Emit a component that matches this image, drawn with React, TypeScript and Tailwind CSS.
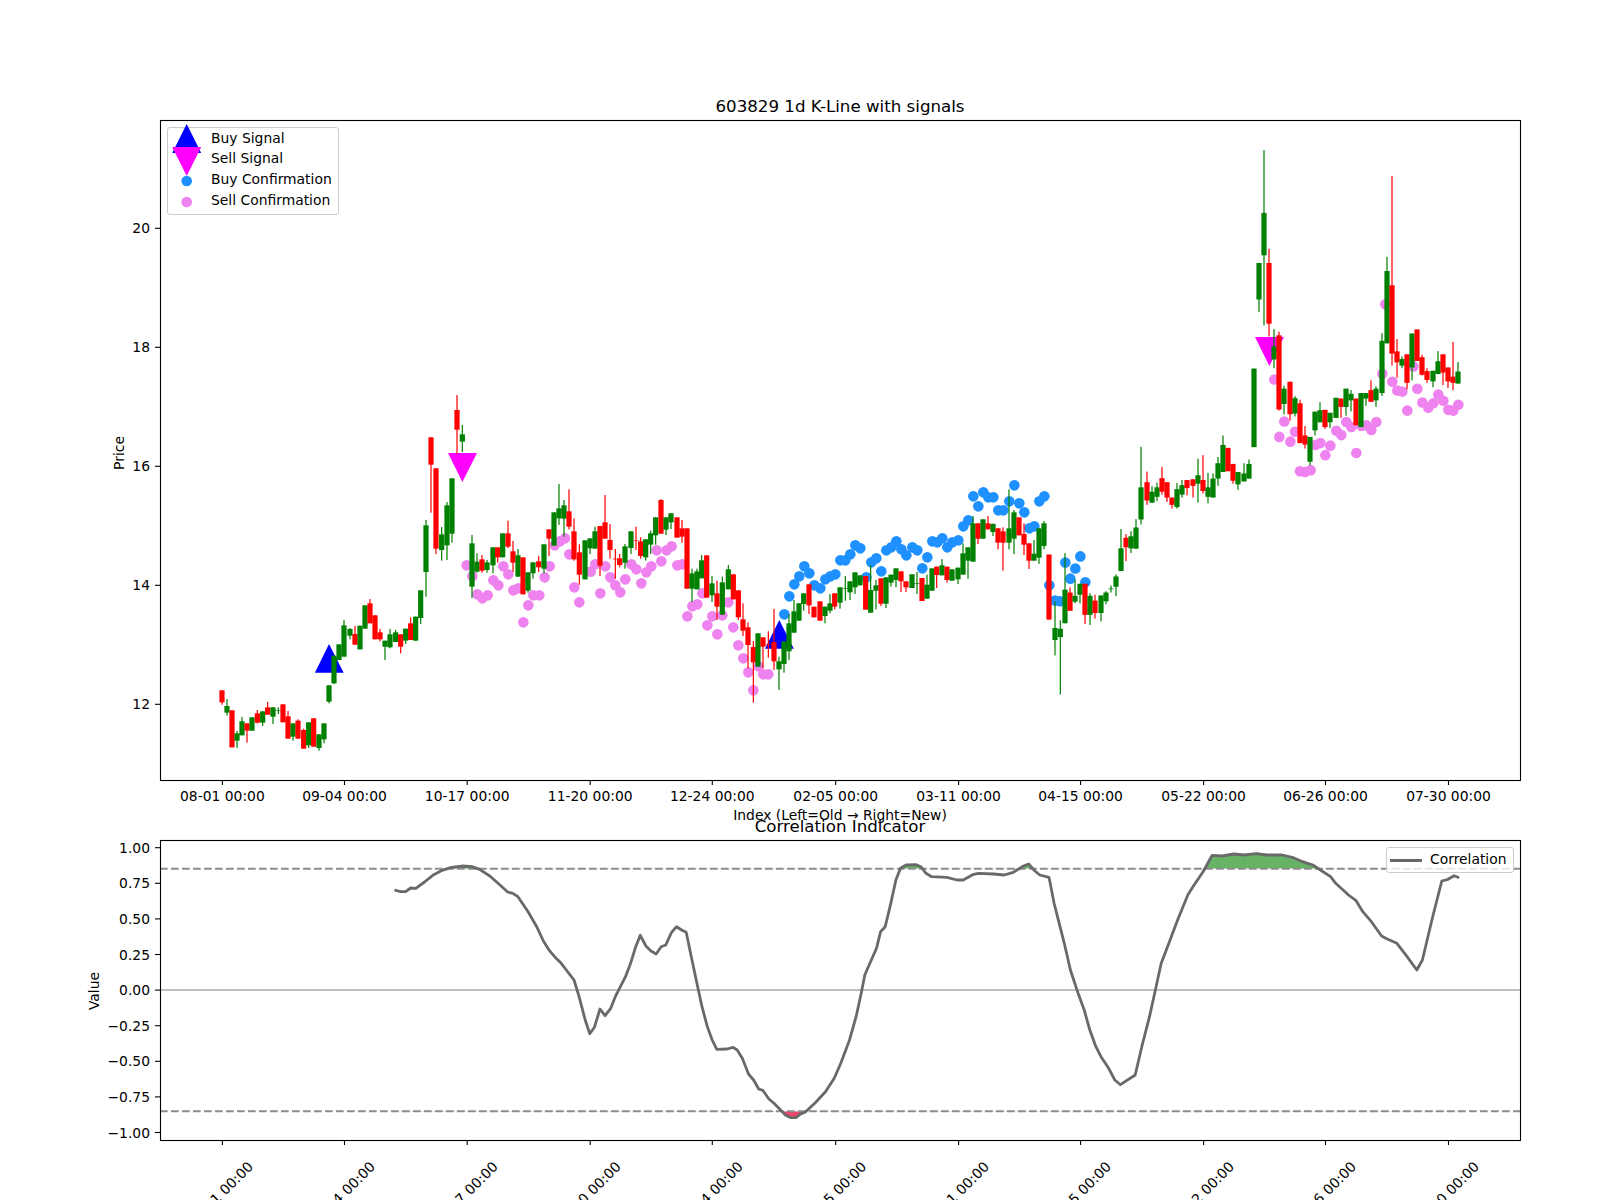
const RED = "#ff0000";
const GREEN = "#008000";
const FONT = "font-['DejaVu_Sans',sans-serif]";

const tickX = [222.4, 344.5, 467.2, 590.2, 712.3, 835.7, 958.6, 1080.6, 1203.6, 1325.5, 1448.5];
const tickDates = [
  "08-01 00:00",
  "09-04 00:00",
  "10-17 00:00",
  "11-20 00:00",
  "12-24 00:00",
  "02-05 00:00",
  "03-11 00:00",
  "04-15 00:00",
  "05-22 00:00",
  "06-26 00:00",
  "07-30 00:00",
];

type Row = [string, number, number, number, number?, number?];
type Seg = { x0: number; y0: number; sy: number; rows: Row[] };

// candles read off the chart: colour, x, body top, body bottom, wick top, wick bottom
const segments: Seg[] = [
  {
    x0: 200,
    y0: 400,
    sy: 3,
    rows: [
      ["r", 66, 871, 907, 871, 914],
      ["g", 81, 918, 938, 897, 947],
      ["r", 96, 931, 1042],
      ["g", 111, 1000, 1022, 993, 1044],
      ["g", 126, 964, 1006, 951, 1006],
      ["r", 141, 970, 992, 970, 1028],
      ["g", 156, 952, 992],
      ["r", 172, 940, 968, 930, 970],
      ["g", 188, 934, 968, 934, 978],
      ["r", 203, 922, 944, 906, 944],
      ["g", 219, 922, 950, 922, 972],
      ["g", 235, 930, 932, 922, 942],
      ["r", 249, 913, 967],
      ["r", 264, 949, 1016, 933, 1016],
      ["g", 279, 970, 1010, 970, 1022],
      ["r", 294, 962, 1016, 958, 1016],
      ["r", 311, 990, 1046, 986, 1046],
      ["g", 326, 967, 1036, 967, 1044],
      ["r", 341, 955, 1040],
      ["g", 357, 1003, 1044, 1003, 1052],
      ["g", 372, 970, 1018, 970, 1030],
      ["g", 387, 856, 905, 856, 910],
      ["g", 402, 767, 850, 767, 852],
      ["g", 417, 733, 780],
      ["g", 432, 676, 770, 660, 770],
      ["g", 450, 687, 707, 684, 718],
      ["r", 465, 702, 734, 678, 734],
      ["g", 480, 677, 748],
      ["g", 495, 616, 686],
      ["r", 510, 610, 670, 597, 670],
      ["r", 525, 646, 718],
      ["r", 540, 697, 718, 687, 724],
      ["g", 555, 722, 740, 722, 780],
      ["g", 570, 703, 742, 687, 745],
      ["g", 587, 697, 726, 690, 726],
      ["r", 602, 703, 740, 703, 760],
      ["g", 617, 686, 722, 686, 732],
      ["r", 632, 670, 720, 652, 720],
      ["g", 647, 650, 722],
      ["g", 662, 571, 654, 571, 672],
      ["g", 678, 376, 516, 360, 590],
      ["r", 693, 112, 194, 112, 338],
      ["r", 708, 205, 446, 205, 462],
      ["g", 725, 403, 450, 381, 482],
      ["g", 741, 316, 436, 306, 480],
      ["g", 756, 235, 401, 235, 428],
      ["r", 771, 30, 89, -15, 162],
      ["g", 787, 103, 125, 75, 156],
    ],
  },
  {
    x0: 450,
    y0: 460,
    sy: 3,
    rows: [
      ["g", 66, 250, 380, 225, 414],
      ["g", 81, 305, 335, 280, 338],
      ["r", 96, 298, 332, 285, 338],
      ["g", 111, 307, 330, 300, 338],
      ["g", 129, 262, 316, 262, 340],
      ["r", 143, 262, 292, 262, 308],
      ["g", 158, 220, 292],
      ["r", 174, 220, 260, 182, 264],
      ["r", 189, 274, 308, 243, 336],
      ["g", 204, 286, 350, 267, 350],
      ["r", 219, 292, 403],
      ["g", 234, 337, 392, 337, 398],
      ["g", 249, 307, 340, 307, 356],
      ["r", 266, 304, 322, 288, 336],
      ["g", 282, 253, 326, 253, 340],
      ["r", 297, 208, 236, 208, 288],
      ["g", 312, 157, 257],
      ["g", 327, 145, 175, 72, 195],
      ["g", 342, 136, 176, 120, 230],
      ["r", 357, 154, 200, 88, 208],
      ["r", 372, 214, 298, 175, 302],
      ["r", 388, 277, 344, 253, 374],
      ["g", 405, 241, 358],
      ["g", 420, 235, 265, 235, 282],
      ["g", 435, 214, 266, 200, 266],
      ["r", 450, 198, 317, 198, 348],
      ["r", 465, 187, 236, 105, 236],
      ["r", 480, 240, 270, 192, 296],
      ["r", 496, 296, 298, 267, 356],
      ["r", 509, 295, 315, 282, 322],
      ["g", 525, 259, 308, 252, 326],
      ["g", 543, 214, 264, 214, 282],
      ["r", 558, 240, 242, 200, 270],
      ["r", 572, 244, 288, 232, 296],
      ["g", 587, 238, 292, 238, 302],
      ["g", 602, 220, 254, 212, 282],
      ["g", 617, 172, 226, 172, 254],
      ["r", 633, 120, 221, 117, 221],
      ["g", 648, 172, 209, 172, 225],
      ["g", 663, 160, 187, 160, 207],
      ["r", 681, 172, 233],
      ["r", 696, 205, 230, 180, 248],
      ["r", 711, 205, 386],
      ["g", 726, 340, 386, 326, 426],
      ["g", 741, 334, 388, 326, 388],
      ["g", 755, 301, 355, 285, 355],
      ["r", 770, 286, 413],
      ["g", 786, 370, 406, 348, 426],
      ["r", 801, 400, 440, 362, 480],
      ["g", 817, 367, 464, 350, 464],
      ["g", 835, 328, 388, 315, 388],
      ["r", 850, 343, 418],
      ["r", 865, 391, 472, 391, 480],
      ["r", 879, 478, 512, 430, 528],
      ["r", 894, 502, 555, 487, 625],
    ],
  },
  {
    x0: 750,
    y0: 460,
    sy: 3,
    rows: [
      ["r", 10, 561, 607, 543, 728],
      ["g", 24, 520, 620],
      ["r", 39, 532, 560, 532, 625],
      ["r", 55, 553, 555, 514, 593],
      ["r", 72, 546, 604, 447, 630],
      ["g", 87, 604, 628, 590, 690],
      ["g", 102, 544, 612, 544, 638],
      ["g", 117, 490, 574, 462, 600],
      ["g", 132, 454, 518, 420, 518],
      ["g", 147, 430, 482],
      ["g", 161, 400, 432, 400, 452],
      ["r", 177, 373, 436, 373, 462],
      ["r", 192, 440, 472],
      ["r", 210, 424, 482],
      ["g", 225, 440, 468, 440, 490],
      ["g", 240, 430, 452, 402, 460],
      ["r", 254, 400, 440, 400, 448],
      ["g", 270, 382, 428, 382, 446],
      ["g", 286, 385, 387, 348, 422],
      ["g", 300, 364, 397, 364, 420],
      ["g", 315, 337, 382, 337, 402],
      ["g", 330, 346, 376],
      ["r", 347, 348, 449],
      ["g", 362, 390, 458, 316, 458],
      ["g", 378, 376, 392, 360, 448],
      ["r", 393, 355, 431, 355, 438],
      ["g", 408, 352, 431, 352, 444],
      ["g", 423, 344, 368, 344, 380],
      ["g", 438, 325, 360, 325, 382],
      ["r", 453, 334, 364, 334, 396],
      ["r", 468, 364, 382, 364, 396],
      ["g", 486, 343, 384],
      ["g", 501, 370, 372, 336, 402],
      ["r", 516, 354, 423],
      ["g", 531, 374, 416, 344, 416],
      ["g", 546, 325, 392, 325, 392],
      ["r", 560, 320, 345, 320, 384],
      ["g", 576, 316, 346, 297, 346],
      ["r", 591, 320, 360, 320, 368],
      ["g", 606, 328, 362],
      ["g", 624, 323, 358, 323, 372],
      ["g", 639, 280, 344, 250, 344],
      ["g", 654, 262, 302, 262, 356],
      ["g", 669, 190, 305, 168, 305],
      ["r", 684, 190, 236, 190, 252],
      ["g", 699, 178, 236],
      ["r", 714, 190, 208, 168, 208],
      ["g", 729, 192, 216, 190, 228],
      ["r", 744, 205, 248, 205, 268],
      ["r", 759, 214, 248, 202, 332],
      ["g", 777, 205, 248, 88, 268],
      ["g", 792, 157, 236, 150, 282],
      ["r", 807, 172, 226],
      ["r", 822, 222, 254, 190, 285],
      ["r", 837, 250, 302, 250, 327],
      ["g", 852, 281, 302, 240, 302],
      ["g", 867, 205, 293, 205, 312],
      ["g", 882, 190, 258, 183, 268],
    ],
  },
  {
    x0: 1030,
    y0: 130,
    sy: 2.737,
    rows: [
      ["r", 57, 1162, 1340],
      ["g", 75, 1363, 1396, 1290, 1438],
      ["g", 91, 1365, 1388, 1342, 1545],
      ["g", 105, 1258, 1350, 1158, 1350],
      ["r", 120, 1266, 1316, 1252, 1316],
      ["g", 135, 1275, 1291, 1230, 1295],
      ["g", 150, 1242, 1272, 1242, 1296],
      ["r", 165, 1242, 1327, 1242, 1352],
      ["g", 180, 1275, 1327, 1268, 1355],
      ["r", 195, 1288, 1322, 1272, 1337],
      ["g", 213, 1274, 1322, 1274, 1345],
      ["g", 228, 1266, 1290, 1262, 1298],
      ["g", 243, 1255, 1257, 1247, 1266],
      ["g", 258, 1222, 1250, 1216, 1276],
      ["g", 273, 1145, 1207, 1092, 1207],
      ["r", 288, 1116, 1142, 1106, 1180],
      ["g", 303, 1112, 1145, 1098, 1158],
      ["g", 318, 1088, 1146, 1065, 1146],
      ["g", 333, 978, 1066, 867, 1080],
      ["r", 351, 964, 1014, 935, 1026],
      ["g", 366, 990, 1020, 975, 1020],
      ["g", 381, 978, 1004, 965, 1016],
      ["r", 396, 953, 990, 922, 998],
      ["r", 411, 964, 1006, 964, 1018],
      ["r", 426, 1006, 1026, 1006, 1036],
      ["g", 441, 983, 1032, 966, 1036],
      ["g", 456, 972, 998, 958, 1006],
      ["r", 471, 958, 980, 958, 1000],
      ["r", 489, 956, 974, 956, 1006],
      ["g", 504, 945, 968, 900, 1020],
      ["r", 519, 958, 988, 890, 995],
      ["g", 534, 978, 1004, 938, 1022],
      ["g", 549, 954, 1006, 940, 1006],
      ["g", 564, 912, 954, 895, 974],
      ["g", 579, 862, 936, 836, 936],
      ["r", 594, 870, 934],
      ["r", 609, 914, 960, 914, 968],
      ["g", 624, 936, 970, 936, 985],
      ["g", 642, 940, 962, 912, 962],
      ["g", 657, 914, 954, 902, 954],
      ["g", 672, 653, 868],
      ["g", 687, 364, 464, 364, 498],
      ["g", 702, 227, 343, 55, 535],
      ["r", 717, 364, 530, 325, 565],
      ["g", 732, 592, 628, 545, 652],
      ["r", 747, 562, 765, 552, 768],
      ["g", 762, 708, 750, 700, 778],
      ["r", 780, 689, 778, 689, 795],
      ["g", 795, 734, 776, 728, 784],
      ["r", 810, 748, 857, 738, 857],
      ["r", 825, 836, 861, 810, 872],
      ["g", 840, 840, 908, 840, 918],
      ["g", 855, 771, 822, 771, 836],
      ["g", 870, 767, 800, 745, 800],
      ["r", 885, 766, 813, 766, 818],
      ["g", 900, 774, 800, 774, 816],
      ["g", 918, 733, 788],
      ["r", 933, 735, 758, 735, 788],
      ["g", 948, 708, 758, 708, 782],
      ["g", 963, 722, 740, 712, 770],
      ["r", 978, 735, 808],
      ["g", 993, 720, 813],
      ["g", 1008, 720, 735, 720, 755],
      ["r", 1023, 712, 744, 685, 744],
      ["g", 1038, 708, 740, 702, 758],
      ["g", 1056, 577, 720, 556, 728],
      ["g", 1071, 386, 584, 347, 584],
      ["r", 1086, 425, 612, 126, 645],
      ["r", 1101, 606, 636, 572, 678],
      ["g", 1116, 627, 645, 620, 652],
      ["r", 1131, 614, 692, 614, 710],
      ["g", 1146, 557, 650, 557, 685],
      ["r", 1161, 546, 632],
      ["r", 1176, 622, 670, 615, 672],
      ["r", 1191, 660, 684, 652, 692],
      ["g", 1209, 659, 688, 659, 704],
      ["g", 1224, 633, 668, 605, 668],
      ["r", 1239, 614, 664, 614, 698],
      ["r", 1254, 650, 688, 650, 706],
      ["r", 1269, 675, 692, 580, 712],
      ["g", 1284, 661, 694, 635, 694],
    ],
  },
];

const candles = segments.flatMap((seg) =>
  seg.rows.map(([c, zx, top, bottom, wickTop, wickBottom]) => ({
    color: c === "r" ? RED : GREEN,
    x: seg.x0 + zx / 3,
    top: seg.y0 + top / seg.sy,
    bottom: seg.y0 + bottom / seg.sy,
    wickTop: seg.y0 + (wickTop ?? top) / seg.sy,
    wickBottom: seg.y0 + (wickBottom ?? bottom) / seg.sy,
  }))
);

const z3 = (p: number[]) => [450 + p[0] / 3, 460 + p[1] / 3];
const z4 = (p: number[]) => [750 + p[0] / 3, 460 + p[1] / 3];
const z5 = (p: number[]) => [1030 + p[0] / 3, 130 + p[1] / 2.737];

const sellDots = [
  ...[
    [50, 316], [67, 349], [82, 403], [97, 415], [113, 406], [130, 361], [145, 376], [160, 319], [175, 343],
    [190, 391], [205, 385], [220, 487], [235, 436], [250, 406], [268, 406], [284, 352], [299, 319], [314, 256],
    [330, 244], [345, 235], [358, 283], [373, 382], [388, 427], [422, 335], [436, 313], [451, 400], [466, 319],
    [481, 352], [496, 376], [511, 397], [526, 358], [544, 313], [559, 328], [574, 370], [589, 337], [604, 319],
    [620, 271], [634, 304], [650, 271], [665, 259], [682, 316], [697, 313], [712, 469], [727, 439], [742, 433],
    [757, 400], [772, 496], [787, 469], [802, 523], [817, 466], [835, 427], [850, 502], [865, 556], [880, 595],
    [895, 637], [910, 691], [925, 619], [940, 643], [955, 643],
  ].map(z3),
  ...[
    [733, 683], [763, 798], [748, 840], [781, 853], [795, 826], [810, 934], [825, 936], [842, 931], [856, 862],
    [871, 857], [886, 890], [901, 864], [919, 823], [934, 835], [949, 799], [964, 813], [979, 884], [994, 810],
    [1009, 808], [1024, 821], [1039, 799], [1057, 667], [1066, 477], [1087, 689], [1102, 713], [1117, 716],
    [1132, 768], [1150, 647], [1162, 708], [1177, 746], [1195, 760], [1210, 748], [1225, 724], [1240, 741],
    [1255, 766], [1270, 768], [1285, 752],
  ].map(z5),
];

const buyDots = [
  ...[
    [103, 463], [118, 409], [133, 373], [148, 349], [163, 319], [178, 340], [193, 376], [211, 385], [226, 358],
    [241, 349], [256, 343], [271, 301], [286, 301], [301, 283], [316, 256], [331, 265], [349, 352], [364, 307],
    [379, 295], [394, 334], [409, 271], [424, 262], [439, 244], [454, 268], [469, 286], [487, 262], [502, 271],
    [517, 325], [532, 292], [547, 244], [562, 247], [577, 235], [592, 262], [607, 247], [625, 241], [640, 199],
    [655, 181], [670, 109], [685, 139], [700, 97], [715, 112], [730, 112], [745, 151], [760, 151], [778, 124],
    [793, 76], [808, 130], [823, 157], [838, 205], [853, 199], [868, 124], [883, 109], [898, 376],
  ].map(z4),
  ...[
    [75, 1288], [90, 1290], [106, 1184], [121, 1228], [136, 1200], [151, 1167], [166, 1238],
  ].map(z5),
];

// correlation line, as read from the two lower crops
const corrA = [
  [773, 330], [785, 335], [795, 335], [805, 324], [815, 325], [832, 306], [850, 284], [865, 272], [885, 262],
  [908, 258], [925, 260], [940, 268], [960, 288], [980, 315], [995, 336], [1005, 340], [1015, 350], [1035, 395],
  [1052, 440], [1065, 483], [1077, 512], [1090, 535], [1100, 550], [1125, 600], [1135, 650], [1147, 720],
  [1156, 761], [1165, 742], [1176, 687], [1186, 707], [1197, 685], [1206, 650], [1226, 590], [1236, 550],
  [1246, 500], [1255, 466], [1266, 498], [1276, 513], [1286, 522], [1296, 500], [1305, 495], [1316, 458],
  [1326, 440], [1336, 450], [1345, 457], [1355, 530], [1366, 610], [1376, 680], [1386, 738], [1396, 780],
  [1405, 808], [1425, 807], [1437, 802], [1445, 810], [1455, 835], [1467, 882], [1477, 900], [1487, 927],
  [1495, 931], [1507, 957], [1517, 970], [1530, 990], [1540, 1006], [1550, 1013], [1560, 1013],
];
const corrB = [
  [0, 1003], [10, 997], [30, 968], [50, 935], [67, 895], [80, 850], [97, 780], [110, 710], [120, 640], [127, 585],
  [137, 550], [150, 505], [158, 455], [167, 440], [178, 370], [188, 300], [197, 265], [208, 255], [228, 254],
  [237, 260], [247, 280], [258, 290], [288, 292], [308, 300], [320, 300], [340, 283], [350, 280], [380, 282],
  [400, 285], [418, 277], [438, 258], [448, 252], [460, 272], [470, 285], [488, 292], [498, 370], [518, 490],
  [530, 570], [545, 640], [557, 690], [568, 750], [580, 800], [590, 830], [605, 865], [617, 900], [628, 914],
  [657, 885], [670, 800], [685, 710], [698, 620], [708, 550], [718, 510], [740, 420], [760, 345], [770, 320],
  [790, 275], [808, 226], [828, 228], [850, 222], [870, 225], [895, 221], [915, 225], [945, 225], [965, 232],
  [985, 245], [1005, 255], [1020, 270], [1040, 290], [1050, 310], [1075, 345], [1090, 362], [1103, 395], [1120, 425],
  [1140, 468], [1150, 476], [1170, 490], [1190, 530], [1209, 570], [1220, 540], [1240, 410], [1258, 303], [1270, 298],
  [1282, 287], [1292, 293],
];
const corrPoints = [
  ...corrA.map(([x, y]) => [x / 1.96, 780 + y / 3]),
  ...corrB.map(([x, y]) => [800 + x / 1.96, 780 + y / 3]),
];
const corrLine = corrPoints.map(([x, y]) => `${x.toFixed(1)},${y.toFixed(1)}`).join(" ");
const corrFirstX = corrPoints[0][0];
const corrLastX = corrPoints[corrPoints.length - 1][0];

const HIGH = 868.7;
const LOW = 1111.3;
const valueTicks = ["1.00", "0.75", "0.50", "0.25", "0.00", "−0.25", "−0.50", "−0.75", "−1.00"];

function Legend() {
  const rows = [
    { label: "Buy Signal", mark: <polygon points="0,-12 14.5,17 -14.5,17" fill="#0000ff" /> },
    { label: "Sell Signal", mark: <polygon points="-14.5,-10 14.5,-10 0,19" fill="#ff00ff" /> },
    { label: "Buy Confirmation", mark: <circle cy="3" r="5.3" fill="#1e90ff" /> },
    { label: "Sell Confirmation", mark: <circle cy="3" r="5.3" fill="#ee82ee" /> },
  ];
  return (
    <div className="absolute left-[167px] top-[9px] w-[172px] h-[88px] flex flex-col border border-[#cccccc] rounded-[3px] bg-white/80">
      {rows.map((r) => (
        <div key={r.label} className="flex items-center h-[20.9px]">
          <svg width="43" height="20" viewBox="-18.7 -8 43 20" className="overflow-visible shrink-0">
            {r.mark}
          </svg>
          <span className="text-[13.89px] leading-none text-black whitespace-nowrap">{r.label}</span>
        </div>
      ))}
    </div>
  );
}

function Frame({ y, h }: { y: number; h: number }) {
  return <rect x="160.5" y={y} width="1360" height={h} fill="none" stroke="#000" strokeWidth="1.1" />;
}

function KLineChart() {
  return (
    <div className="relative w-[1600px] h-[700px]">
      <svg width="1600" height="700" viewBox="0 118 1600 700" className="block overflow-visible">
        {/* signals and confirmation dots sit under the candles */}
        {sellDots.map(([x, y], i) => (
          <circle key={i} cx={x} cy={y} r="5.3" fill="#ee82ee" />
        ))}
        {buyDots.map(([x, y], i) => (
          <circle key={i} cx={x} cy={y} r="5.3" fill="#1e90ff" />
        ))}
        <polygon points="329,644 343.7,672.7 314.9,672.7" fill="#0000ff" />
        <polygon points="779.3,620 793.8,648.7 765,648.7" fill="#0000ff" />
        <polygon points="448,453 477,453 462.4,482" fill="#ff00ff" />
        <polygon points="1255,337 1284,337 1269.4,366" fill="#ff00ff" />

        {candles.map((c, i) => (
          <g key={i} fill={c.color}>
            <rect x={c.x - 0.6} y={c.wickTop} width="1.2" height={c.wickBottom - c.wickTop} />
            <rect x={c.x - 2.6} y={c.top} width="5.2" height={c.bottom - c.top} />
          </g>
        ))}

        <Frame y={120.5} h={660} />

        {tickX.map((x, i) => (
          <g key={x}>
            <line x1={x} x2={x} y1="780" y2="785" stroke="#000" strokeWidth="1.1" />
            <text x={x} y="801" textAnchor="middle" fontSize="13.89" fill="#000">
              {tickDates[i]}
            </text>
          </g>
        ))}
        {[
          ["20", 228.3],
          ["18", 347.3],
          ["16", 466.3],
          ["14", 585.3],
          ["12", 704.3],
        ].map(([label, y]) => (
          <g key={label}>
            <line x1="155" x2="160" y1={y} y2={y} stroke="#000" strokeWidth="1.1" />
            <text x="150" y={Number(y) + 5} textAnchor="end" fontSize="13.89" fill="#000">
              {label}
            </text>
          </g>
        ))}
        <text x="0" y="0" transform="translate(124 453) rotate(-90)" textAnchor="middle" fontSize="13.89" fill="#000">
          Price
        </text>
        <text x="840" y="820" textAnchor="middle" fontSize="13.89" fill="#000">
          Index (Left=Old → Right=New)
        </text>
      </svg>
      <Legend />
    </div>
  );
}

function CorrelationChart() {
  const zones = `${corrLine} ${corrLastX.toFixed(1)}`;
  return (
    <div className="relative w-[1600px] h-[362px]">
      <svg width="1600" height="362" viewBox="0 838 1600 362" className="block">
        <defs>
          <clipPath id="above">
            <rect x="160" y="840" width="1360" height={HIGH - 840} />
          </clipPath>
          <clipPath id="below">
            <rect x="160" y={LOW} width="1360" height={1140 - LOW} />
          </clipPath>
        </defs>
        <polygon
          points={`${zones},${HIGH} ${corrFirstX.toFixed(1)},${HIGH}`}
          fill="#008000"
          fillOpacity="0.6"
          clipPath="url(#above)"
        />
        <polygon
          points={`${zones},${LOW} ${corrFirstX.toFixed(1)},${LOW}`}
          fill="#f0456c"
          clipPath="url(#below)"
        />
        <line x1="160" x2="1520" y1={HIGH} y2={HIGH} stroke="#8c8c8c" strokeWidth="2" strokeDasharray="7.7 3.3" />
        <line x1="160" x2="1520" y1={LOW} y2={LOW} stroke="#8c8c8c" strokeWidth="2" strokeDasharray="7.7 3.3" />
        <line x1="160" x2="1520" y1="990" y2="990" stroke="#aaaaaa" strokeWidth="1.7" />
        <polyline points={corrLine} fill="none" stroke="#696969" strokeWidth="2.8" strokeLinejoin="round" />

        <Frame y={840.5} h={300} />

        {tickX.map((x, i) => (
          <g key={x}>
            <line x1={x} x2={x} y1="1140" y2="1145" stroke="#000" strokeWidth="1.1" />
            <text
              transform={`translate(${x - 2} 1194) rotate(-45)`}
              textAnchor="middle"
              dominantBaseline="central"
              fontSize="13.89"
              fill="#000"
            >
              {tickDates[i]}
            </text>
          </g>
        ))}
        {valueTicks.map((label, i) => {
          const y = 847.7 + i * 35.6;
          return (
            <g key={label}>
              <line x1="155" x2="160" y1={y} y2={y} stroke="#000" strokeWidth="1.1" />
              <text x="150" y={y + 5} textAnchor="end" fontSize="13.89" fill="#000">
                {label}
              </text>
            </g>
          );
        })}
        <text x="0" y="0" transform="translate(99 991) rotate(-90)" textAnchor="middle" fontSize="13.89" fill="#000">
          Value
        </text>
      </svg>
      <div className="absolute left-[1386px] top-[9px] w-[128px] h-[26px] flex items-center border border-[#cccccc] rounded-[3px] bg-white/80">
        <span className="ml-[3px] mr-[8px] w-[32px] h-[3px] bg-[#696969]" />
        <span className="text-[13.89px] leading-none text-black">Correlation</span>
      </div>
    </div>
  );
}

export default function App() {
  return (
    <div className={`w-[1600px] h-[1200px] bg-white overflow-hidden flex flex-col ${FONT}`}>
      <h1 className="h-[118px] pt-[97px] pl-[160px] w-[1520px] text-center text-[16.67px] leading-[20px] font-normal text-black">
        603829 1d K-Line with signals
      </h1>
      <KLineChart />
      <h2 className="relative z-10 h-[20px] mt-[-1px] mb-[1px] pl-[160px] w-[1520px] text-center text-[16.67px] leading-[20px] font-normal text-black">
        Correlation Indicator
      </h2>
      <CorrelationChart />
    </div>
  );
}
